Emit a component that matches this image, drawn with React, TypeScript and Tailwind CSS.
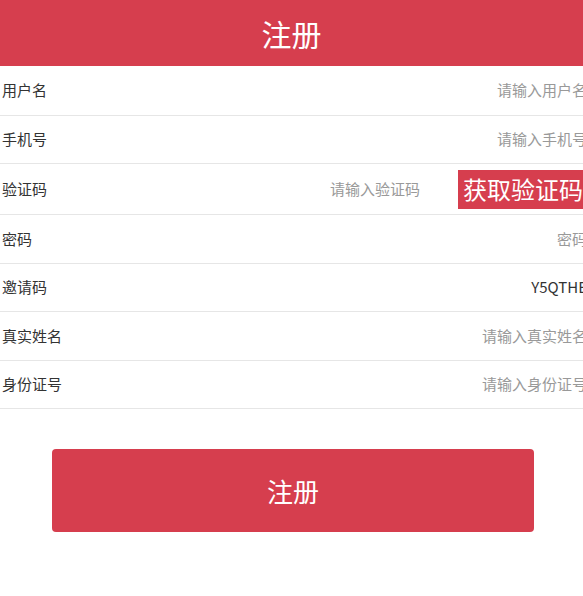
import React from "react";

const font = { fontFamily: '"Noto Sans CJK SC", "Noto Sans", sans-serif' };

function Row({ label, placeholder, value, h }: { label: string; placeholder?: string; value?: string; h: string }) {
  return (
    <div className={`flex items-center border-b border-[#e6e6e6] ${h}`}>
      <span className="pl-[2px] text-[15px] text-[#333] whitespace-nowrap">{label}</span>
      <div className="flex-1" />
      {value ? (
        <span className="-mr-[4px] text-[15px] text-[#333] whitespace-nowrap">{value}</span>
      ) : (
        <span className="-mr-[4px] text-[15px] text-[#999] whitespace-nowrap">{placeholder}</span>
      )}
    </div>
  );
}

export default function App() {
  return (
    <div className="w-[583px] h-[596px] overflow-hidden bg-white" style={font}>
      <div className="h-[66px] bg-[#d63e4e] flex items-center justify-center">
        <span className="text-[30px] text-white leading-none">注册</span>
      </div>
      <Row label="用户名" placeholder="请输入用户名" h="h-[50px]" />
      <Row label="手机号" placeholder="请输入手机号" h="h-[48px]" />
      <div className="flex items-center border-b border-[#e6e6e6] h-[51px]">
        <span className="pl-[2px] text-[15px] text-[#333] whitespace-nowrap">验证码</span>
        <div className="flex-1" />
        <span className="text-[15px] text-[#999] whitespace-nowrap">请输入验证码</span>
        <div className="w-[38px]" />
        <div className="h-[39px] w-[129px] -mr-[4px] shrink-0 bg-[#d63e4e] flex items-center pl-[5px] overflow-hidden">
          <span className="text-[24px] leading-none text-white whitespace-nowrap">获取验证码</span>
        </div>
      </div>
      <Row label="密码" placeholder="密码" h="h-[49px]" />
      <Row label="邀请码" value="Y5QTHE" h="h-[48px]" />
      <Row label="真实姓名" placeholder="请输入真实姓名" h="h-[49px]" />
      <Row label="身份证号" placeholder="请输入身份证号" h="h-[48px]" />
      <div className="pt-[40px] pl-[52px] pr-[49px]">
        <button className="w-full h-[83px] rounded-[4px] bg-[#d63e4e] text-white text-[26px] flex items-center justify-center">
          注册
        </button>
      </div>
    </div>
  );
}
